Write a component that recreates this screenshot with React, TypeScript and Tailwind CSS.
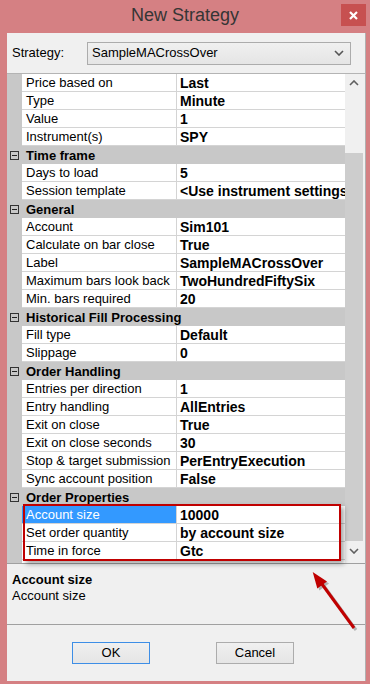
import React from "react";

type Row = { h?: string; n?: string; v?: string; sel?: boolean };

const rows: Row[] = [
  { n: "Price based on", v: "Last" },
  { n: "Type", v: "Minute" },
  { n: "Value", v: "1" },
  { n: "Instrument(s)", v: "SPY" },
  { h: "Time frame" },
  { n: "Days to load", v: "5" },
  { n: "Session template", v: "<Use instrument settings>" },
  { h: "General" },
  { n: "Account", v: "Sim101" },
  { n: "Calculate on bar close", v: "True" },
  { n: "Label", v: "SampleMACrossOver" },
  { n: "Maximum bars look back", v: "TwoHundredFiftySix" },
  { n: "Min. bars required", v: "20" },
  { h: "Historical Fill Processing" },
  { n: "Fill type", v: "Default" },
  { n: "Slippage", v: "0" },
  { h: "Order Handling" },
  { n: "Entries per direction", v: "1" },
  { n: "Entry handling", v: "AllEntries" },
  { n: "Exit on close", v: "True" },
  { n: "Exit on close seconds", v: "30" },
  { n: "Stop & target submission", v: "PerEntryExecution" },
  { n: "Sync account position", v: "False" },
  { h: "Order Properties" },
  { n: "Account size", v: "10000", sel: true },
  { n: "Set order quantity", v: "by account size" },
  { n: "Time in force", v: "Gtc" },
];

function GridRow({ r }: { r: Row }) {
  if (r.h) {
    return (
      <div className="flex h-[18px] items-center bg-[#c8c8c8]">
        <div className="ml-[3px] flex h-[9px] w-[9px] items-center justify-center border border-[#333]">
          <div className="h-px w-[5px] bg-[#222]" />
        </div>
        <div className="ml-[7px] whitespace-nowrap pt-[1px] text-[13px] font-bold leading-[18px] text-black">
          {r.h}
        </div>
      </div>
    );
  }
  return (
    <div className="flex h-[18px]">
      <div className="w-[15px] shrink-0 bg-[#c8c8c8]" />
      <div
        className={
          r.sel
            ? "w-[155px] shrink-0 overflow-hidden whitespace-nowrap border-b border-r border-[#d4d4d4] bg-[#3399ff] pl-[4px] text-[13px] leading-[18px] text-white"
            : "w-[155px] shrink-0 overflow-hidden whitespace-nowrap border-b border-r border-[#d4d4d4] bg-white pl-[4px] text-[13px] leading-[18px] text-black"
        }
      >
        {r.n}
      </div>
      <div className="min-w-0 flex-1 overflow-hidden whitespace-nowrap border-b border-[#d4d4d4] bg-white pl-[3px] text-[14px] font-bold leading-[18px] text-black">
        {r.v}
      </div>
    </div>
  );
}

export default function App() {
  return (
    <div className="relative flex h-[684px] w-[370px] flex-col bg-[#d58083] font-['Liberation_Sans',Arial,sans-serif] text-black">
      {/* Title bar */}
      <div className="flex h-[33px] shrink-0 items-start px-[4px]">
        <div className="w-[25px]" />
        <div className="flex-1 pt-[4px] text-center text-[18px] leading-[22px] text-[#353535]">
          New Strategy
        </div>
        <div className="mt-[4px] flex h-[22px] w-[25px] items-center justify-center bg-[#c75050]">
          <svg width="9" height="9" viewBox="0 0 9 9">
            <path d="M1 1L8 8M8 1L1 8" stroke="#fff" strokeWidth="2.2" />
          </svg>
        </div>
      </div>

      {/* Client */}
      <div className="ml-[7px] flex h-[648px] w-[359px] flex-col border-r border-[#b0b0b0] bg-[#f0f0f0]">
        {/* Strategy row */}
        <div className="flex h-[40px] shrink-0 items-center">
          <div className="ml-[5px] w-[75px] text-[13px] leading-[16px]">Strategy:</div>
          <div className="flex h-[23px] w-[264px] items-center justify-between border border-[#acacac] bg-gradient-to-b from-[#f0f0f0] to-[#e5e5e5] pl-[4px] pr-[6px]">
            <span className="text-[13px] leading-[16px]">SampleMACrossOver</span>
            <svg width="10" height="6" viewBox="0 0 10 6">
              <path d="M1 1L5 5L9 1" stroke="#555" strokeWidth="1.6" fill="none" />
            </svg>
          </div>
        </div>

        {/* Grid */}
        <div className="flex h-[490px] shrink-0 border-t border-[#b4b4b4]">
          <div className="flex w-[338px] flex-col bg-white">
            {rows.map((r, i) => (
              <GridRow key={i} r={r} />
            ))}
            <div className="flex flex-1">
              <div className="w-[15px] bg-[#c8c8c8]" />
              <div className="flex-1 bg-white" />
            </div>
          </div>
          <div className="flex h-[486px] w-[18px] flex-col bg-[#f0f0f0]">
            <div className="flex h-[18px] items-center justify-center">
              <svg width="10" height="6" viewBox="0 0 10 6">
                <path d="M1 5L5 1L9 5" stroke="#606060" strokeWidth="1.6" fill="none" />
              </svg>
            </div>
            <div className="h-[61px]" />
            <div className="h-[388px] bg-[#cdcdcd]" />
            <div className="flex h-[19px] items-center justify-center">
              <svg width="10" height="6" viewBox="0 0 10 6">
                <path d="M1 1L5 5L9 1" stroke="#606060" strokeWidth="1.6" fill="none" />
              </svg>
            </div>
          </div>
        </div>

        {/* Description */}
        <div className="flex h-[62px] shrink-0 flex-col border-b border-t border-[#a0a0a0] pl-[5px] pt-[8px]">
          <div className="text-[13px] font-bold leading-[16px]">Account size</div>
          <div className="text-[13px] leading-[16px]">Account size</div>
        </div>

        {/* Buttons */}
        <div className="flex gap-[66px] pl-[65px] pt-[17px]">
          <div className="flex h-[22px] w-[78px] items-center justify-center border border-[#3d8ee6] bg-gradient-to-b from-[#f0f0f0] to-[#e5e5e5] text-[13px]">
            OK
          </div>
          <div className="flex h-[22px] w-[78px] items-center justify-center border border-[#acacac] bg-gradient-to-b from-[#f0f0f0] to-[#e5e5e5] text-[13px]">
            Cancel
          </div>
        </div>
      </div>

      {/* Annotation: red box */}
      <div className="pointer-events-none absolute left-[23px] top-[504px] h-[57px] w-[318px] border-2 border-[#c00000] shadow-[3px_3px_5px_rgba(0,0,0,0.35)]" />

      {/* Annotation: arrow */}
      <svg
        className="pointer-events-none absolute left-0 top-0"
        width="370"
        height="684"
        viewBox="0 0 370 684"
      >
        <g transform="translate(2,2)" opacity="0.25">
          <line x1="354" y1="628" x2="319" y2="580" stroke="#000" strokeWidth="3" />
          <polygon points="312.7,572 327,581.5 317.3,588.5" fill="#000" />
        </g>
        <line x1="354" y1="628" x2="319" y2="580" stroke="#c00000" strokeWidth="3" />
        <polygon points="312.7,572 327,581.5 317.3,588.5" fill="#c00000" />
      </svg>
    </div>
  );
}
